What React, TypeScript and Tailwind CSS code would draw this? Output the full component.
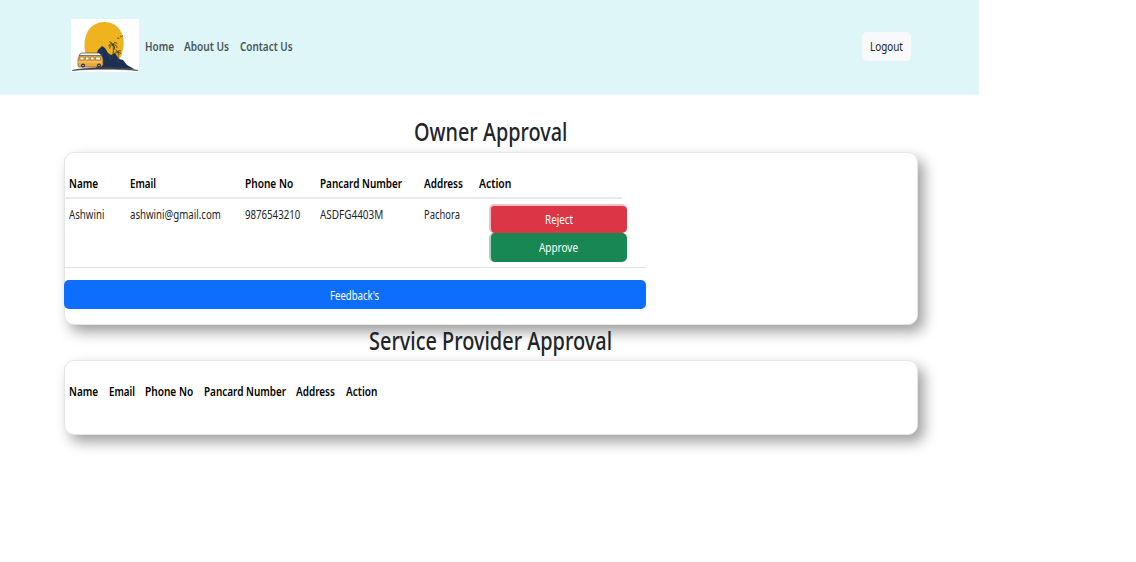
import { useLayoutEffect, useRef, useState } from 'react';

type LabelProps = { text: string; width: number; className?: string };

// A single line of text condensed horizontally so that it fills its width.
function Label({ text, width, className = '' }: LabelProps) {
  const ref = useRef<HTMLSpanElement>(null);
  const [scale, setScale] = useState(1);
  useLayoutEffect(() => {
    if (ref.current) setScale(width / ref.current.offsetWidth);
  }, [width, text]);
  return (
    <span className={`block shrink-0 whitespace-nowrap ${className}`} style={{ width }}>
      <span ref={ref} className="inline-block origin-left" style={{ transform: `scaleX(${scale})` }}>
        {text}
      </span>
    </span>
  );
}

function Palm({ x, y, s }: { x: number; y: number; s: number }) {
  return (
    <g transform={`translate(${x} ${y}) scale(${s})`} stroke="#3a3a1f" fill="none" strokeLinecap="round">
      <path d="M0 0C1 4 .5 9-.5 15" strokeWidth="1.1" />
      <path d="M0 0C-2-3-4-2-5 1M0 0C-3-1-4 2-4 4M0 0C0-3 3-4 5-2M0 0C3-1 5 1 5 3M0 0C2 1 2 3 2 5M0 0C-1-2-2-4-4-4" strokeWidth="1.2" />
    </g>
  );
}

function Logo() {
  return (
    <svg viewBox="0 0 68 53" className="h-[53px] w-[68px] shrink-0 bg-white">
      <path d="M20 43C10 34 12 12 23 6C29 2 38 2 44 6C52 11 54 22 52 30C51 37 48 42 44 46Z" fill="#efb320" />
      <path d="M25 49L25 37L27 31L31 27L34 29L37 34L40 36L44 34L48 40L52 41L56 46L63 50Z" fill="#1b3054" />
      <path d="M30 30L32 34L31 39M37 35L40 41M46 39L48 44" stroke="#294467" strokeWidth=".8" fill="none" />
      <Palm x={42} y={26} s={0.8} />
      <Palm x={47} y={33} s={0.55} />
      <path d="M46 19L48 19.5L49 18.5M49 17L50.5 17.5L52 16.5" stroke="#6b5213" strokeWidth=".9" fill="none" />
      <path d="M1 51.5C18 47.5 50 47.5 67 51.5C48 49.7 20 49.7 1 51.5Z" fill="#3a3e44" stroke="#444" strokeWidth=".6" />
      <path d="M7 47V40L9 35.5H30L32 40V46L30 48H8Z" fill="#efa93a" stroke="#6c5540" strokeWidth=".7" />
      <path d="M8 36.5L10 34H28L31 36.5Z" fill="#fff5df" stroke="#48505a" strokeWidth=".7" />
      <path d="M9 41V38H13V41ZM14.5 41V38H18V41ZM19.5 41V38H23V41ZM24.5 41V38H29L30 41Z" fill="#fff0cf" stroke="#5b514b" strokeWidth=".5" />
      <path d="M7 43H31" stroke="#ffd88e" strokeWidth=".8" />
      <circle cx="12" cy="46.5" r="2.1" fill="#333538" />
      <circle cx="28" cy="46.5" r="2.1" fill="#333538" />
      <circle cx="12" cy="46.5" r=".7" fill="#ddd" />
      <circle cx="28" cy="46.5" r=".7" fill="#ddd" />
    </svg>
  );
}

const card =
  'ml-16 w-[854px] rounded-[10px] border border-[#e4e6e8] bg-white shadow-[6px_7px_14px_#a0a0a0]';
const heading = 'flex w-[981px] justify-center text-[24.5px] leading-9 font-medium text-[#212529]';

export default function App() {
  return (
    <div className="h-[562px] w-[1136px] overflow-hidden bg-white font-['Noto_Sans','Open_Sans',sans-serif] text-[12px] leading-[18px] text-[#212529]">
      <nav className="flex h-[95px] w-[979px] items-start border-b border-[#e8fafa] bg-[#def6f8] pr-[68px] pl-[71px]">
        <div className="pt-[19px]">
          <Logo />
        </div>
        <div className="ml-1.5 flex gap-[10px] pt-[38px] font-semibold text-[#4b5558]">
          <Label text="Home" width={29} />
          <Label text="About Us" width={45.5} />
          <Label text="Contact Us" width={53} />
        </div>
        <button className="mt-8 ml-auto flex h-[29px] w-[49px] items-center justify-center rounded-[5px] bg-[#f8f9fa] pt-px">
          <Label text="Logout" width={33} />
        </button>
      </nav>

      <main>
        <div className="h-[57px] pt-[19px]">
          <h2 className={heading}>
            <Label text="Owner Approval" width={153} />
          </h2>
        </div>

        <section className={`${card} h-[172.5px] pt-[22px]`}>
          <div className="-ml-px flex h-[24px] w-[558px] border-b-2 border-[#e6eaed] pl-[5px] font-semibold text-black">
            <Label text="Name" width={29} />
            <Label text="Email" width={26} className="ml-8" />
            <Label text="Phone No" width={48} className="ml-[89px]" />
            <Label text="Pancard Number" width={82} className="ml-[26.5px]" />
            <Label text="Address" width={39} className="ml-[22.5px]" />
            <Label text="Action" width={32} className="ml-4" />
          </div>
          <div className="-ml-px flex h-[69px] w-[582px] border-b border-[#dee2e6] pt-[5px] pl-[5px]">
            <Label text="Ashwini" width={35.5} className="pt-0.5" />
            <Label text="ashwini@gmail.com" width={91} className="ml-[25.5px] pt-0.5" />
            <Label text="9876543210" width={55.5} className="ml-6 pt-0.5" />
            <Label text="ASDFG4403M" width={63} className="ml-[19px] pt-0.5" />
            <Label text="Pachora" width={36} className="ml-[41.5px] pt-0.5" />
            <div className="ml-[28.5px] w-[138.5px] self-start">
              <button className="flex h-[29px] w-full items-center justify-center rounded-[5px] border-t-2 border-l-2 border-[#ecc2c7] bg-[#dc3545] pt-px text-white">
                <Label text="Reject" width={28} />
              </button>
              <button className="flex h-[29px] w-full items-center justify-center rounded-[5px] border-l-2 border-[#aacfbe] bg-[#198754] pt-px text-white">
                <Label text="Approve" width={39} />
              </button>
            </div>
          </div>
          <button className="mt-3 -ml-px flex h-[29px] w-[582px] items-center justify-center rounded-[5px] bg-[#0d6efd] pt-[3px] text-white">
            <Label text="Feedback's" width={49.5} />
          </button>
        </section>

        <div className="flow-root h-[35.5px]">
          <h2 className={`${heading} -mt-0.5`}>
            <Label text="Service Provider Approval" width={243} />
          </h2>
        </div>

        <section className={`${card} h-[74.5px] pt-[22px]`}>
          <div className="flex gap-[10.5px] pl-1 font-semibold text-black">
            <Label text="Name" width={29} />
            <Label text="Email" width={26} />
            <Label text="Phone No" width={48} />
            <Label text="Pancard Number" width={82} />
            <Label text="Address" width={39} />
            <Label text="Action" width={31} />
          </div>
        </section>
      </main>
    </div>
  );
}
